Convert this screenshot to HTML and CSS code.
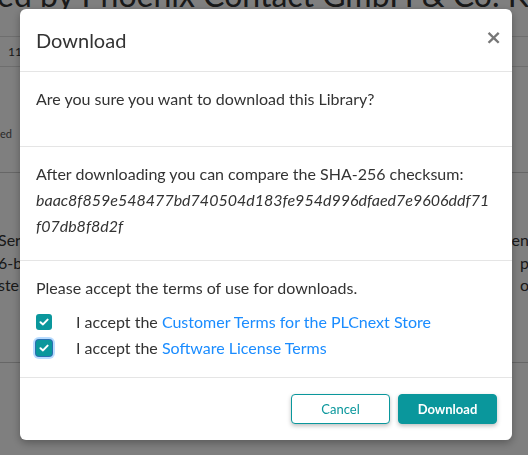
FILE: index.html
```html
<!DOCTYPE html>
<html lang="en">
<head>
  <meta charset="UTF-8" />
  <title>Download</title>
  <link rel="stylesheet" href="styles.css">
</head>
<body>
  <div class="page">
    <h1 class="page-title">ed by Phoenix Contact GmbH &amp; Co. KG</h1>
    <div class="meta-row"><span class="meta-cell">11</span></div>
    <div class="meta-note">ed</div>
    <div class="desc">
      <div class="desc-line"><span>Ser</span><span>en</span></div>
      <div class="desc-line"><span>6-b</span><span>p</span></div>
      <div class="desc-line"><span>ste</span><span>o</span></div>
    </div>
    <div class="changes">improved for multiple clients</div>
  </div>

  <div class="overlay">
    <div class="modal">
      <div class="modal-header">
        <h2 class="modal-title">Download</h2>
        <button class="close">&times;</button>
      </div>
      <div class="modal-section">
        <p class="question">Are you sure you want to download this Library?</p>
      </div>
      <div class="modal-section">
        <p class="checksum">After downloading you can compare the SHA-256 checksum:<br>
          <i class="hash">baac8f859e548477bd740504d183fe954d996dfaed7e9606ddf71f07db8f8d2f</i></p>
      </div>
      <div class="modal-section terms">
        <p>Please accept the terms of use for downloads.</p>
        <label class="check-row">
          <span class="check-box"><svg width="10" height="8" viewBox="0 0 10 8"><path d="M1.5 4.2 L4 6.4 L8.6 1.6" fill="none" stroke="#fff" stroke-width="2" stroke-linecap="round" stroke-linejoin="round"/></svg></span>
          <span>I accept the <a href="#">Customer Terms for the PLCnext Store</a></span>
        </label>
        <label class="check-row">
          <span class="check-box focused"><svg width="10" height="8" viewBox="0 0 10 8"><path d="M1.5 4.2 L4 6.4 L8.6 1.6" fill="none" stroke="#fff" stroke-width="2" stroke-linecap="round" stroke-linejoin="round"/></svg></span>
          <span>I accept the <a href="#">Software License Terms</a></span>
        </label>
      </div>
      <div class="modal-footer">
        <button class="btn btn-outline">Cancel</button>
        <button class="btn btn-primary">Download</button>
      </div>
    </div>
  </div>
</body>
</html>
```

FILE: styles.css
```css
body {
  margin: 0;
  overflow: hidden;
  background: #fff;
  font-family: Lato, 'Noto Sans', sans-serif;
  color: #333;
}

.page {
  height: 455px;
}

.page-title {
  margin: -21px 0 0 -3px;
  font-size: 32px;
  font-weight: 400;
  line-height: 32px;
  color: #333;
  white-space: nowrap;
}

.meta-row {
  margin-top: 25px;
  height: 29px;
  border-top: 1px solid #ddd;
  border-bottom: 1px solid #ddd;
  display: flex;
  align-items: center;
}

.meta-cell {
  padding-left: 8px;
  font-size: 12px;
}

.meta-note {
  margin-top: 60px;
  font-size: 11px;
  line-height: 13px;
  color: #555;
  padding-bottom: 32px;
  border-bottom: 1px solid #ccc;
}

.desc {
  margin-top: 56px;
  font-size: 16px;
  line-height: 22.5px;
  padding-bottom: 65px;
  border-bottom: 1px solid #ccc;
}

.desc-line {
  display: flex;
  justify-content: space-between;
  margin-left: -2px;
  margin-right: -1px;
}

.changes {
  margin-top: 70px;
  font-size: 16px;
}

.overlay {
  position: fixed;
  inset: 0;
  background: rgba(0, 0, 0, 0.5);
  padding: 9px 16px 0 20px;
}

.modal {
  background: #fff;
  border-radius: 6px;
  box-shadow: 0 3px 9px rgba(0, 0, 0, 0.3);
}

.modal-header {
  display: flex;
  align-items: center;
  justify-content: space-between;
  height: 62px;
  padding: 0 16px;
  border-bottom: 1px solid #e5e5e5;
}

.modal-title {
  margin: 0;
  font-size: 20px;
  font-weight: 400;
  color: #333;
}

.close {
  border: none;
  background: none;
  padding: 0;
  margin: -6px -6px 0 0;
  font-family: 'DejaVu Sans', sans-serif;
  font-size: 20px;
  font-weight: 700;
  color: #777;
  cursor: pointer;
}

.modal-section {
  padding: 14px 16px 6px;
  border-bottom: 1px solid #e5e5e5;
  font-size: 16px;
  line-height: 26px;
}

.modal-section p {
  margin: 0;
}

.modal-section .question {
  margin-bottom: 28px;
}

.modal-section .checksum {
  margin-bottom: 15px;
  padding-right: 6px;
}

.hash {
  word-break: break-all;
}

.terms {
  padding-bottom: 16px;
}

.terms p {
  margin-bottom: 8px;
}

.check-row {
  display: flex;
  align-items: center;
  height: 26px;
}

.check-box {
  width: 16px;
  height: 16px;
  border-radius: 3px;
  background: #0a979c;
  display: flex;
  align-items: center;
  justify-content: center;
  margin-right: 24px;
}

.check-box.focused {
  box-shadow: 0 0 0 1px #2a6fb0, 0 0 0 3px #b9dcff;
}

a {
  color: #1a8cff;
  text-decoration: none;
}

.modal-footer {
  display: flex;
  justify-content: flex-end;
  gap: 8px;
  padding: 16px 15px;
}

.btn {
  width: 99px;
  height: 30px;
  border-radius: 4px;
  font-family: Lato, sans-serif;
  font-size: 13px;
  cursor: pointer;
  box-shadow: 0 2px 4px rgba(0, 0, 0, 0.25);
}

.btn-outline {
  background: #fff;
  color: #0a979c;
  border: 1px solid #0a979c;
}

.btn-primary {
  background: #0a979c;
  color: #fff;
  border: 1px solid #0a979c;
  font-weight: 700;
}
```
